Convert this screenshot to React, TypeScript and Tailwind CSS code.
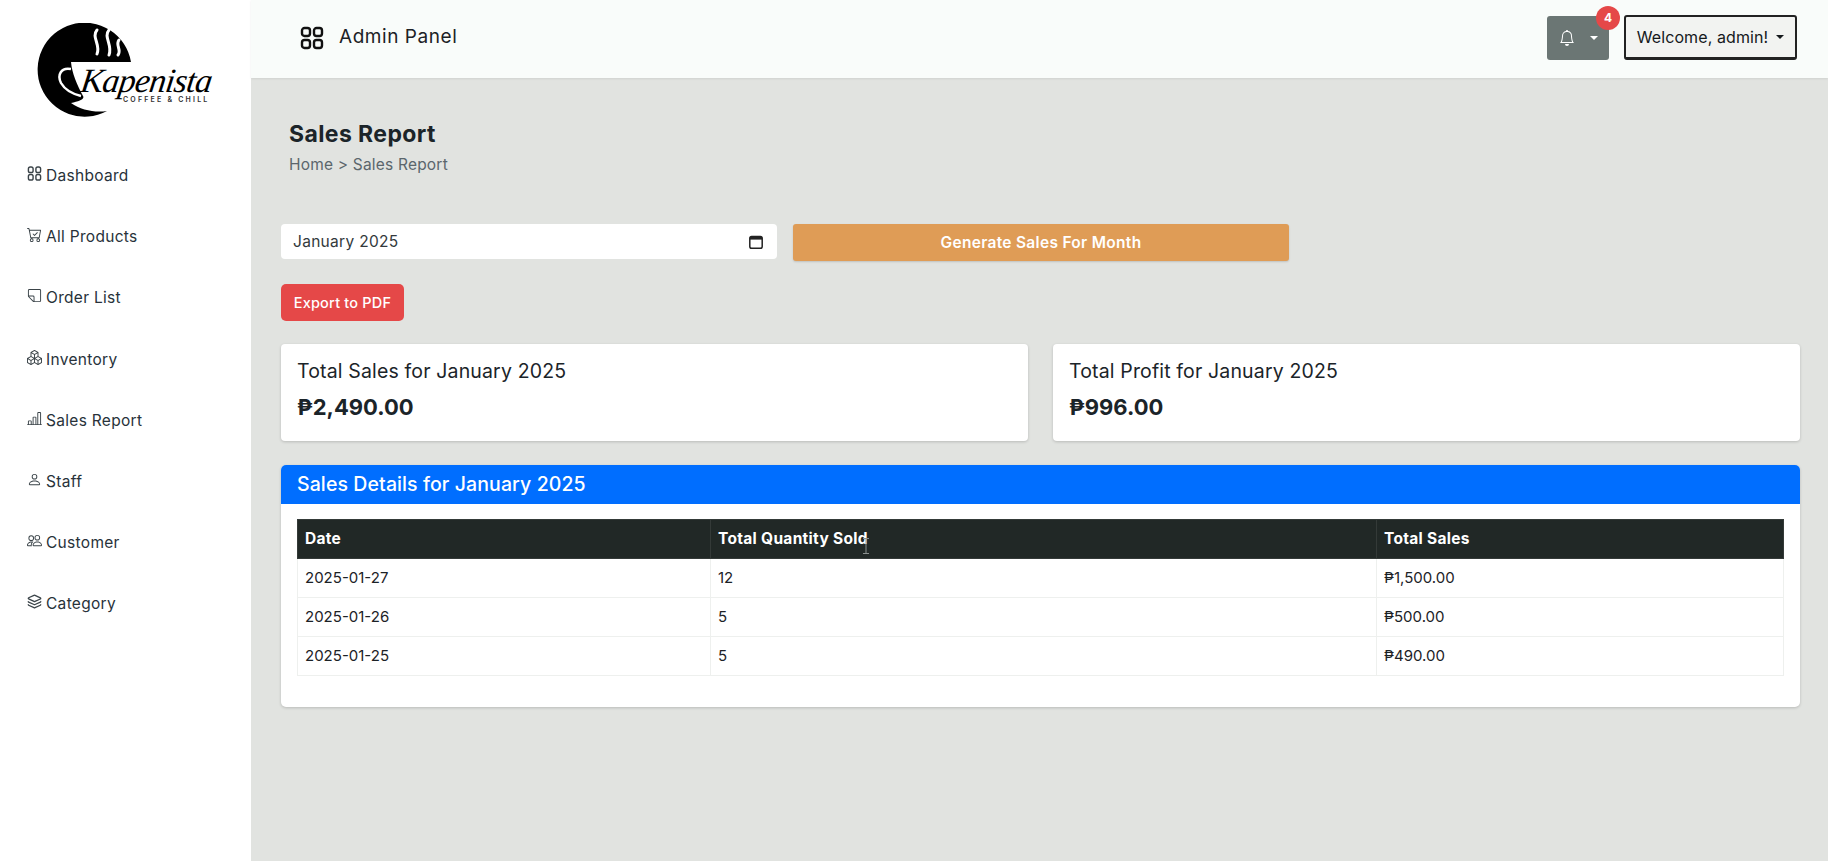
import React from "react";
import { BsCartCheck, BsSticky, BsBoxes, BsBarChartLine, BsPerson, BsPeople, BsBell } from "react-icons/bs";
import { Layers } from "lucide-react";

function SmallGrid({ className }: { className?: string }) {
  return (
    <svg viewBox="0 0 16 16" fill="none" stroke="currentColor" strokeWidth="1.5" className={className}>
      <rect x="1.5" y="1" width="5" height="6" rx="2" />
      <rect x="9.5" y="1" width="5" height="6" rx="2" />
      <rect x="1.5" y="9" width="5" height="6" rx="2" />
      <rect x="9.5" y="9" width="5" height="6" rx="2" />
    </svg>
  );
}

function FlipSticky({ className }: { className?: string }) {
  return <BsSticky className={`${className} -scale-x-100`} />;
}

const nav = [
  { label: "Dashboard", Icon: SmallGrid },
  { label: "All Products", Icon: BsCartCheck },
  { label: "Order List", Icon: FlipSticky },
  { label: "Inventory", Icon: BsBoxes },
  { label: "Sales Report", Icon: BsBarChartLine },
  { label: "Staff", Icon: BsPerson },
  { label: "Customer", Icon: BsPeople },
  { label: "Category", Icon: Layers },
];

const rows = [
  ["2025-01-27", "12", "₱1,500.00"],
  ["2025-01-26", "5", "₱500.00"],
  ["2025-01-25", "5", "₱490.00"],
];

function Logo() {
  return (
    <svg width="96" height="96" viewBox="0 0 96 96" className="block">
      <path d="M94 39 A47 47 0 1 0 70 88 C58 90 44 87 34 80 C42 78 48 76 46 73 C40 62 35 50 34 39 Z" fill="#000" />
      <path d="M34 46 C24 44 20 52 24 60 C28 67 36 71 44 73" stroke="#fff" strokeWidth="2.5" fill="none" />
      <path d="M60 7 C54 14 64 22 60 31 M72 7 C66 14 76 22 72 32 M82 17 C78 22 85 27 81 32" stroke="#fff" strokeWidth="3" fill="none" strokeLinecap="round" />
    </svg>
  );
}

export default function App() {
  return (
    <div className="flex h-[861px] w-[1828px] overflow-hidden bg-[#e1e3e0] font-['Inter','Noto_Sans',sans-serif] text-[#212826]">
      <aside className="flex w-[251px] shrink-0 flex-col bg-white">
        <div className="relative ml-[37px] mt-[23px] h-[104px]">
          <Logo />
          <span className="absolute left-[44px] top-[38px] origin-left skew-x-[-8deg] whitespace-nowrap font-['Liberation_Serif',serif] text-[34px] italic leading-[40px] tracking-[-0.8px] text-black">
            Kapenista
          </span>
          <span className="absolute left-[86px] top-[73px] whitespace-nowrap bg-white text-[7px] font-semibold leading-[8px] tracking-[2.2px] text-[#333]">
            COFFEE &amp; CHILL
          </span>
        </div>
        <nav className="mt-[18px] flex flex-col pl-[27px]">
          {nav.map(({ label, Icon }) => (
            <a key={label} className="flex h-[61.2px] items-center gap-[4px] text-[15.5px] tracking-[0.3px] text-[#28323a]">
              <Icon className="relative -top-[2px] h-[15px] w-[15px] shrink-0 text-[#3a4348]" />
              <span>{label}</span>
            </a>
          ))}
        </nav>
      </aside>

      <div className="flex min-w-0 flex-1 flex-col">
        <header className="flex h-[78px] shrink-0 items-center justify-between bg-[#f9fcfa] pb-[3px] pl-[49px] pr-[31px] shadow-[0_1px_2px_rgba(0,0,0,0.08)]">
          <div className="flex items-center gap-[15px]">
            <svg width="24" height="24" viewBox="0 0 24 24" fill="none" stroke="#111" strokeWidth="2.4">
              <rect x="2" y="2" width="8" height="8" rx="2.5" />
              <rect x="14" y="2" width="8" height="8" rx="2.5" />
              <rect x="2" y="14" width="8" height="8" rx="2.5" />
              <rect x="14" y="14" width="8" height="8" rx="2.5" />
            </svg>
            <span className="text-[19px] tracking-[0.55px] text-[#1c2226]">Admin Panel</span>
          </div>
          <div className="flex items-center gap-[15px]">
            <div className="relative flex h-[44px] w-[62px] items-center justify-center gap-[15px] rounded-[3px] bg-[#6b7674] text-white">
              <BsBell className="h-[16px] w-[16px]" />
              <span className="h-0 w-0 border-x-[4px] border-t-[4px] border-x-transparent border-t-white" />
              <span className="absolute -right-[11px] -top-[10px] flex h-[24px] w-[24px] items-center justify-center rounded-full bg-[#e54848] text-[12px] font-bold text-white">4</span>
            </div>
            <div className="flex h-[45px] w-[173px] items-center justify-center gap-[8px] rounded-[3px] border-2 border-b-[3px] border-[#222] bg-[#f2f3f1] text-[16px] tracking-[0.1px] text-[#15191c]">
              <span>Welcome, admin!</span>
              <span className="h-0 w-0 border-x-[4px] border-t-[4px] border-x-transparent border-t-[#15191c]" />
            </div>
          </div>
        </header>

        <main className="flex-1 pl-[30px] pr-[28px]">
          <div className="pl-[8px] pt-[41px]">
            <h1 className="text-[23px] font-bold leading-[30px] tracking-[0.4px] text-[#1b2429]">Sales Report</h1>
            <p className="mt-[4px] text-[15.5px] leading-[24px] tracking-[0.2px] text-[#5b666c]">Home &gt; Sales Report</p>
          </div>

          <div className="mt-[47px] flex items-start gap-[16px]">
            <div className="flex h-[35px] w-[496px] items-center justify-between rounded-[4px] bg-white pl-[12px] pr-[14px]">
              <input
                readOnly
                value="January 2025"
                className="w-[300px] bg-transparent text-[15.5px] tracking-[0.3px] text-[#33393c] outline-none"
              />
              <svg width="14" height="14" viewBox="0 0 14 14" fill="none">
                <rect x="0.8" y="1.5" width="12.4" height="11.7" rx="1.8" stroke="#222" strokeWidth="1.5" />
                <rect x="1" y="2" width="12" height="2.6" fill="#222" />
              </svg>
            </div>
            <button className="h-[37px] w-[496px] rounded-[3px] bg-[#df9c56] text-[15.5px] font-semibold tracking-[0.3px] text-white shadow-[0_1px_2px_rgba(0,0,0,0.15)]">
              Generate Sales For Month
            </button>
          </div>

          <button className="mt-[23px] block h-[37px] w-[123px] rounded-[5px] bg-[#e54848] text-[14.5px] font-medium tracking-[0.2px] text-white">
            Export to PDF
          </button>

          <div className="mt-[23px] flex gap-[25px]">
            {[
              ["Total Sales for January 2025", "₱2,490.00"],
              ["Total Profit for January 2025", "₱996.00"],
            ].map(([t, v]) => (
              <div key={t} className="h-[97px] flex-1 rounded-[4px] bg-white px-[16px] pt-[13px] shadow-[0_1px_3px_rgba(0,0,0,0.18)]">
                <div className="text-[19.5px] leading-[28px] tracking-[0.15px] text-[#1b2429]">{t}</div>
                <div className="mt-[7px] text-[22px] font-bold leading-[30px] text-[#1b2429]">{v}</div>
              </div>
            ))}
          </div>

          <section className="mt-[24px] h-[242px] rounded-[5px] bg-white shadow-[0_1px_3px_rgba(0,0,0,0.18)]">
            <div className="flex h-[39px] items-center rounded-t-[5px] bg-[#006eff] px-[16px] text-[19.5px] font-medium tracking-[0.1px] text-white">
              Sales Details for January 2025
            </div>
            <div className="relative px-[16px] pt-[15px]">
              <table className="w-full table-fixed border-collapse text-[15px] text-[#1c2226]">
                <colgroup>
                  <col className="w-[413px]" />
                  <col className="w-[666px]" />
                  <col />
                </colgroup>
                <thead>
                  <tr className="h-[39px] bg-[#212826] text-left text-[15.5px] tracking-[0.3px] text-white">
                    <th className="border border-[#343a38] px-[7px] font-bold">Date</th>
                    <th className="border border-[#343a38] px-[7px] font-bold">Total Quantity Sold</th>
                    <th className="border border-[#343a38] px-[7px] font-bold">Total Sales</th>
                  </tr>
                </thead>
                <tbody>
                  {rows.map((r) => (
                    <tr key={r[0]} className="h-[39px]">
                      {r.map((c, i) => (
                        <td key={i} className="border border-[#eef0ee] px-[7px]">{c}</td>
                      ))}
                    </tr>
                  ))}
                </tbody>
              </table>
              <svg width="8" height="16" viewBox="0 0 8 16" className="absolute left-[581px] top-[34px]" fill="none">
                <path d="M1 .5 H7 M4 .5 V15.5 M1 15.5 H7" stroke="#8a908e" strokeWidth="1" />
              </svg>
            </div>
          </section>
        </main>
      </div>
    </div>
  );
}
